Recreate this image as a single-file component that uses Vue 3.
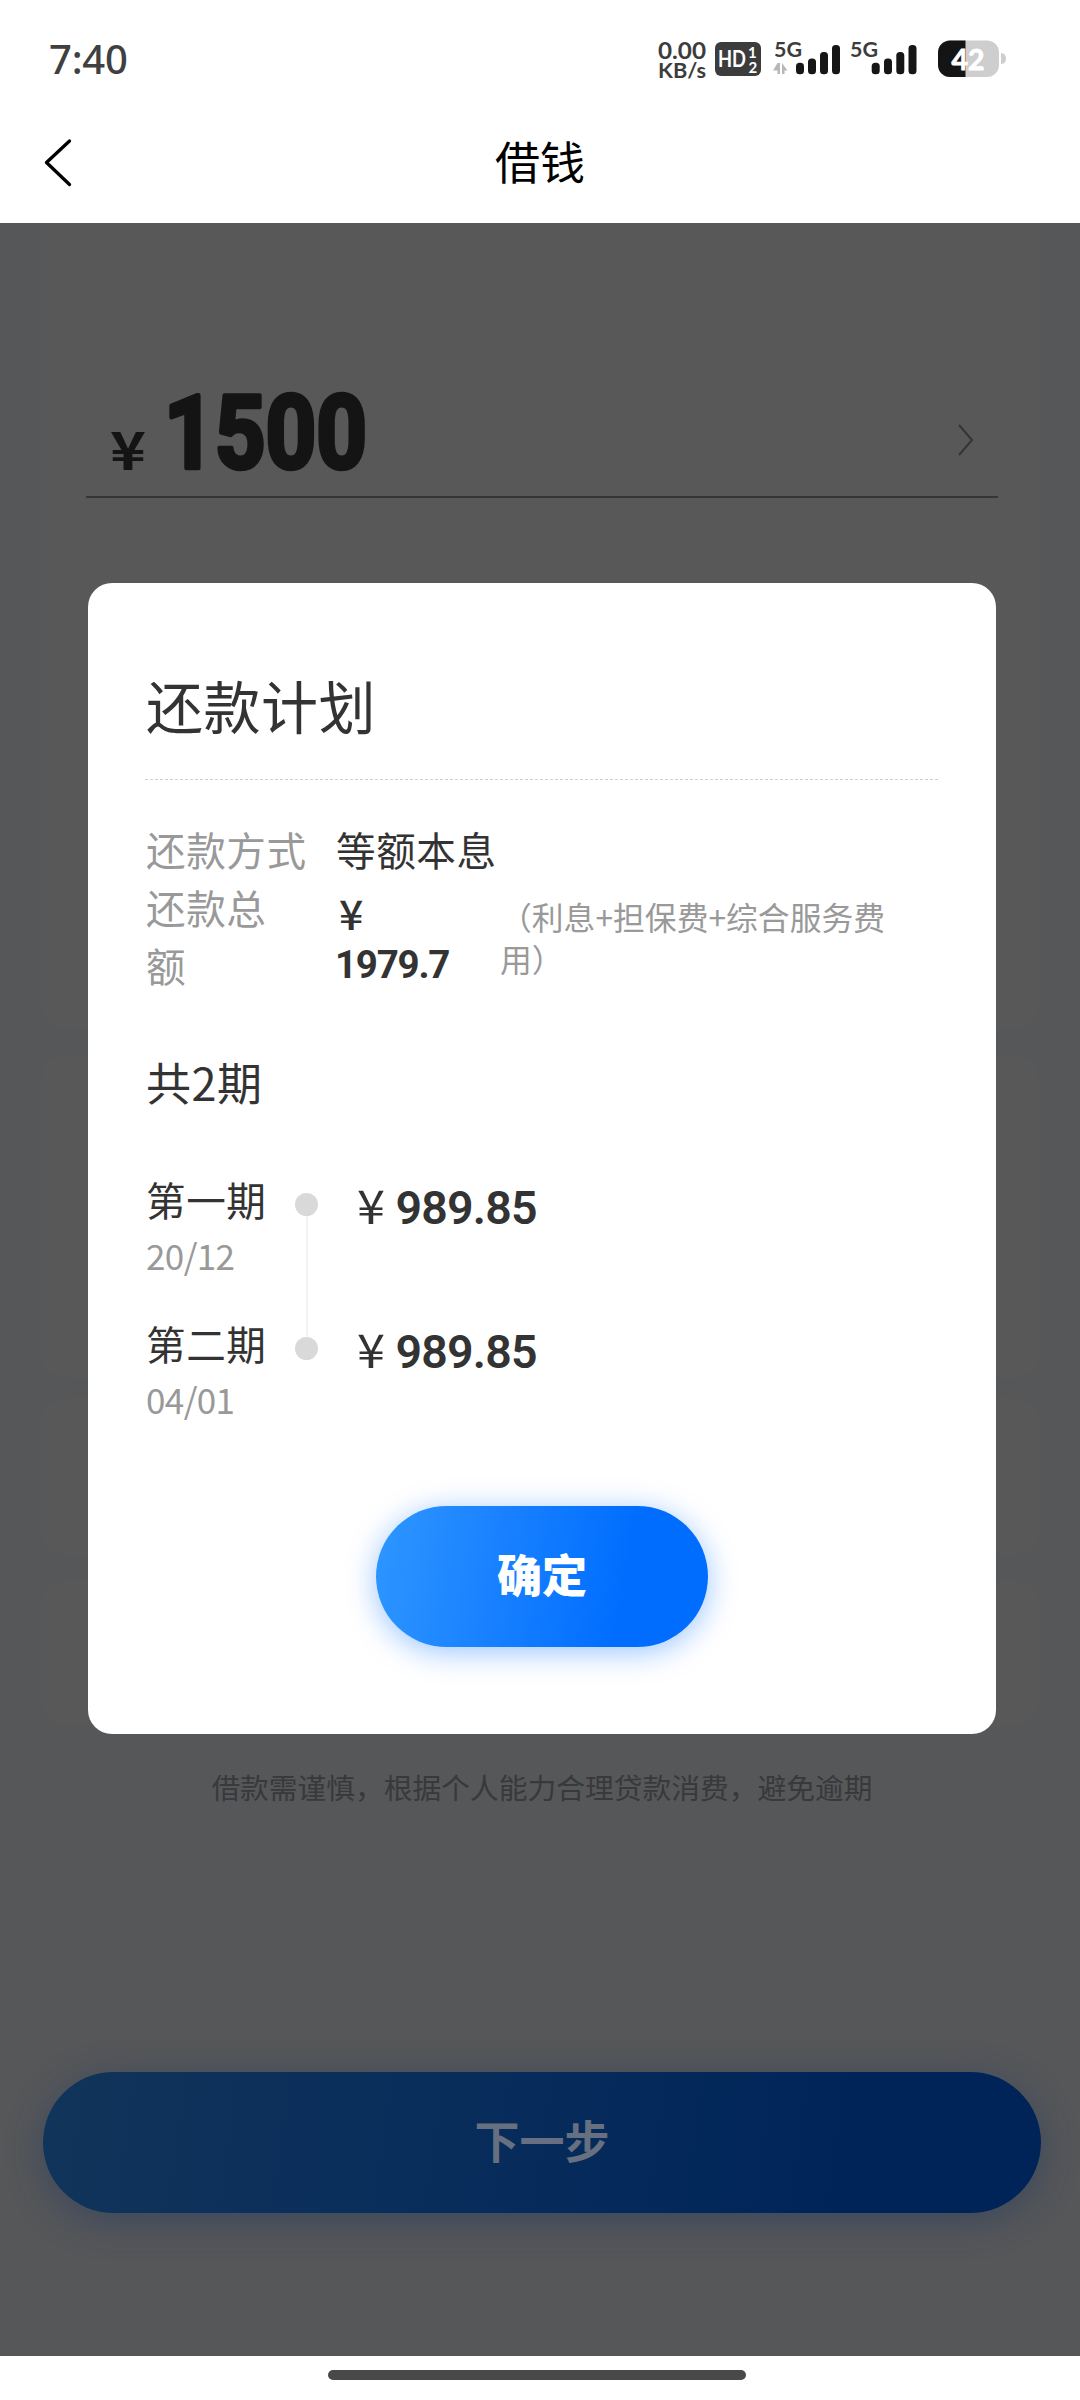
<script setup>
const periods = [
  { name: '第一期', date: '20/12', amount: '989.85' },
  { name: '第二期', date: '04/01', amount: '989.85' },
]
const signals = [
  { x: 136, arrows: true, bars: [156, 168, 180, 192] },
  { x: 212, arrows: false, bars: [231.7, 244, 256.3, 268.5] },
]
const barTops = [42.7, 38.5, 32, 25]
</script>

<template>
  <div class="screen">
    <header class="top">
      <div class="status">
        <span class="time">7:40</span>
        <svg class="status-icons" width="380" height="80" viewBox="0 0 380 80">
          <g class="lat" fill="#3c3c3c" font-weight="700">
            <text x="18" y="39" font-size="23" textLength="48" lengthAdjust="spacingAndGlyphs">0.00</text>
            <text x="18" y="57.500" font-size="20" textLength="48" lengthAdjust="spacingAndGlyphs">KB/s</text>
          </g>
          <rect x="75" y="22" width="46" height="34" rx="6" fill="#3c3c3c" />
          <g class="lat" fill="#fff" font-weight="700">
            <text x="78" y="46.500" font-size="22" textLength="28" lengthAdjust="spacingAndGlyphs">HD</text>
            <text x="108" y="37.500" font-size="15">1</text>
            <text x="108.500" y="52.500" font-size="15">2</text>
          </g>
          <g v-for="s in signals" :key="s.x">
            <text class="lat" :x="s.x - 2" y="36.500" font-size="21" font-weight="700" fill="#3c3c3c" textLength="28" lengthAdjust="spacingAndGlyphs">5G</text>
            <path v-if="s.arrows" d="M137.500 43h2.500v11h-2.500v-3.500h-4.500zM142 43l5.500 7.500h-3v3.500h-2.500z" fill="#b8b8b8" />
            <rect v-for="(b, i) in s.bars" :key="b" :x="b" :y="barTops[i]" width="8" :height="54.300 - barTops[i]" rx="3.600" fill="#161616" />
          </g>
          <rect x="298" y="20.500" width="61" height="36.500" rx="12" fill="#cecece" />
          <path d="M325.500 20.500V57H310a12 12 0 0 1-12-12V32.500a12 12 0 0 1 12-12z" fill="#141414" />
          <path d="M361 33q5 .5 5 5.500t-5 5.500z" fill="#cecece" />
          <text class="lat" x="311.500" y="50" font-size="28" font-weight="700" fill="#fff" stroke="#fff" stroke-width=".8" textLength="33" lengthAdjust="spacingAndGlyphs">42</text>
        </svg>
      </div>
      <nav class="nav">
        <svg class="back" width="30" height="50" viewBox="0 0 30 50">
          <path d="M26.500 3L3.500 24.500L26.500 46.500" fill="none" stroke="#000" stroke-width="3.300" stroke-linecap="round" stroke-linejoin="round" />
        </svg>
        <h1>借钱</h1>
      </nav>
    </header>

    <main class="body">
      <section class="card first">
        <div class="amount">
          <svg class="din" width="270" height="100" viewBox="0 0 270 100" fill="#141414" font-weight="700">
            <text class="cjk" x="-3" y="89.500" font-size="53" font-weight="700" textLength="36" lengthAdjust="spacingAndGlyphs">¥</text>
            <text class="big" x="51" y="88" font-size="102" textLength="203" lengthAdjust="spacingAndGlyphs">1500</text>
          </svg>
          <svg width="20" height="36" viewBox="0 0 20 36">
            <path d="M3 3L16 18L3 33" fill="none" stroke="#343434" stroke-width="2" />
          </svg>
        </div>
      </section>
      <section class="card second"></section>
      <section class="card third"></section>
      <section class="card fourth"></section>
      <p class="tip">借款需谨慎，根据个人能力合理贷款消费，避免逾期</p>
      <button class="next">下一步</button>
    </main>

    <footer class="home"><i></i></footer>

    <div class="modal">
      <h2>还款计划</h2>
      <dl class="summary">
        <div class="line">
          <dt>还款方式</dt>
          <dd>等额本息</dd>
        </div>
        <div class="line">
          <dt class="narrow">还款总额</dt>
          <dd class="total">
            <svg class="din" width="120" height="100" viewBox="0 0 120 100" fill="#333">
              <text class="cjk" x="3" y="52" font-size="41" font-weight="500" textLength="25" lengthAdjust="spacingAndGlyphs">¥</text>
              <text x="-1" y="100" font-size="38.500" font-weight="700" textLength="116" lengthAdjust="spacing">1979.7</text>
            </svg>
            <span class="note">（利息+担保费+综合服务费用）</span>
          </dd>
        </div>
      </dl>
      <h3>共2期</h3>
      <ul class="plan">
        <li v-for="p in periods" :key="p.name">
          <div class="period">
            <b>{{ p.name }}</b>
            <span>{{ p.date }}</span>
          </div>
          <i class="dot"></i>
          <svg class="din" width="190" height="60" viewBox="0 0 190 60" fill="#333">
            <text class="cjk" x="-14" y="52" font-size="47" textLength="28" lengthAdjust="spacingAndGlyphs">¥</text>
            <text x="24.500" y="52" font-size="46.500" font-weight="600" textLength="142" lengthAdjust="spacing">{{ p.amount }}</text>
          </svg>
        </li>
      </ul>
      <button class="ok">确定</button>
    </div>
  </div>
</template>

<style>
body {
  margin: 0;
}
</style>

<style scoped>
.screen {
  position: relative;
  width: 1080px;
  height: 2400px;
  overflow: hidden;
  background: #fff;
  font-family: "Noto Sans CJK SC", sans-serif;
  color: #333;
}
h1, h2, h3, p, ul, dl, dd {
  margin: 0;
  padding: 0;
  font-weight: 400;
}
svg {
  display: block;
  overflow: visible;
}
.lat {
  font-family: Lato, sans-serif;
}
.din {
  font-family: Roboto, sans-serif;
}
.cjk {
  font-family: "Noto Sans CJK SC", sans-serif;
}
.big {
  stroke: #141414;
  stroke-width: 4.5;
  stroke-linejoin: round;
}
.top {
  height: 223px;
}
.status {
  display: flex;
  justify-content: space-between;
  height: 118px;
  padding: 20px 60px 0 49px;
  box-sizing: border-box;
}
.time {
  font-family: "Noto Sans", sans-serif;
  font-size: 40px;
  line-height: 78px;
  letter-spacing: -0.2px;
  font-weight: 500;
  color: #404040;
}
.nav {
  display: grid;
  grid-template-columns: 100px 1fr 100px;
  align-items: center;
  height: 90px;
}
.back {
  margin-left: 43px;
}
.nav h1 {
  height: 70px;
  text-align: center;
  font-size: 45px;
  line-height: 66px;
  color: #000;
}
.body {
  display: flex;
  flex-direction: column;
  height: 2133px;
  background: #565759;
}
.card {
  margin: 0 41px;
  background: #585858;
  flex: none;
}
.first {
  height: 806px;
  padding: 162px 41px 0 45px;
  box-sizing: border-box;
  border-radius: 0 0 24px 24px;
}
.amount {
  display: flex;
  justify-content: space-between;
  align-items: flex-start;
  height: 111px;
  padding: 0 22px 0 27px;
  border-bottom: 2px solid #353535;
}
.amount svg:first-child {
  margin-top: -5px;
}
.amount svg:last-child {
  margin-top: 37px;
}
.second {
  height: 323px;
  margin-top: 26px;
  border-radius: 24px;
}
.third {
  height: 157px;
  margin-top: 20px;
  border-radius: 24px;
}
.fourth {
  height: 145px;
  margin-top: 26px;
  border-radius: 24px;
}
.tip {
  margin: 39px 0 0 4px;
  text-align: center;
  font-size: 28.75px;
  line-height: 44px;
  color: #38393a;
}
.next {
  height: 141px;
  margin: 263px 39px 0 43px;
  padding: 0;
  border: 0;
  border-radius: 71px;
  background: linear-gradient(98deg, #11345a 0%, #062b5b 52%, #002458 80%);
  box-shadow: 0 8px 36px rgba(20, 50, 100, 0.4);
  font: 700 45px/135px "Noto Sans CJK SC", sans-serif;
  padding-bottom: 6px;
  color: #667080;
}
.home {
  display: flex;
  justify-content: center;
  padding-top: 14px;
}
.home i {
  width: 418px;
  height: 10px;
  margin-right: 6px;
  border-radius: 5px;
  background: #484948;
}
.modal {
  position: absolute;
  left: 88px;
  top: 583px;
  width: 908px;
  height: 1151px;
  padding: 81px 58px 0 57px;
  box-sizing: border-box;
  border-radius: 24px;
  background: #fff;
}
h2 {
  height: 115px;
  padding-left: 1px;
  font-size: 57px;
  letter-spacing: 0.5px;
  line-height: 80px;
  border-bottom: 1px dashed #d0d0d0;
}
.summary {
  margin-top: 40px;
  font-size: 39.6px;
  letter-spacing: 0.6px;
  line-height: 58px;
}
.line {
  display: flex;
}
dt {
  flex: none;
  width: 191px;
  padding-left: 1px;
  box-sizing: border-box;
  color: #999;
}
.narrow {
  width: 150px;
  margin-right: 41px;
}
.total {
  display: flex;
}
.note {
  width: 400px;
  margin: 17px 0 0 44px;
  font-size: 31.8px;
  letter-spacing: 0;
  line-height: 42px;
  color: #999;
}
h3 {
  margin-top: 55px;
  padding-left: 1px;
  font-size: 45px;
  letter-spacing: 0.5px;
  line-height: 66px;
}
.plan {
  list-style: none;
  margin-top: 57px;
}
.plan li {
  display: flex;
  height: 144px;
}
.period {
  display: flex;
  flex-direction: column;
  width: 150px;
  padding-left: 1px;
  box-sizing: border-box;
}
.period b {
  margin-top: -2px;
  font-weight: 400;
  font-size: 39.6px;
  letter-spacing: 0.6px;
  line-height: 58px;
}
.period span {
  font-size: 35px;
  letter-spacing: -0.6px;
  line-height: 54px;
  color: #999;
}
.dot {
  position: relative;
  width: 23px;
  height: 23px;
  margin: 21px 53px 0 0;
  border-radius: 50%;
  background: #d9d9d9;
}
.plan li:first-child .dot::after {
  content: "";
  position: absolute;
  left: 11px;
  top: 23px;
  width: 2px;
  height: 121px;
  background: #f3f3f3;
}
.ok {
  display: block;
  width: 332px;
  height: 141px;
  margin: 46px 0 0 231px;
  padding: 0 0 5px;
  border: 0;
  border-radius: 71px;
  background: linear-gradient(100deg, #2c94ff 4%, #1a82ff 35%, #006dff 74%);
  box-shadow: 0 5px 30px rgba(0, 112, 255, 0.4);
  font: 900 45px/136px "Noto Sans CJK SC", sans-serif;
  color: #fff;
}
</style>
